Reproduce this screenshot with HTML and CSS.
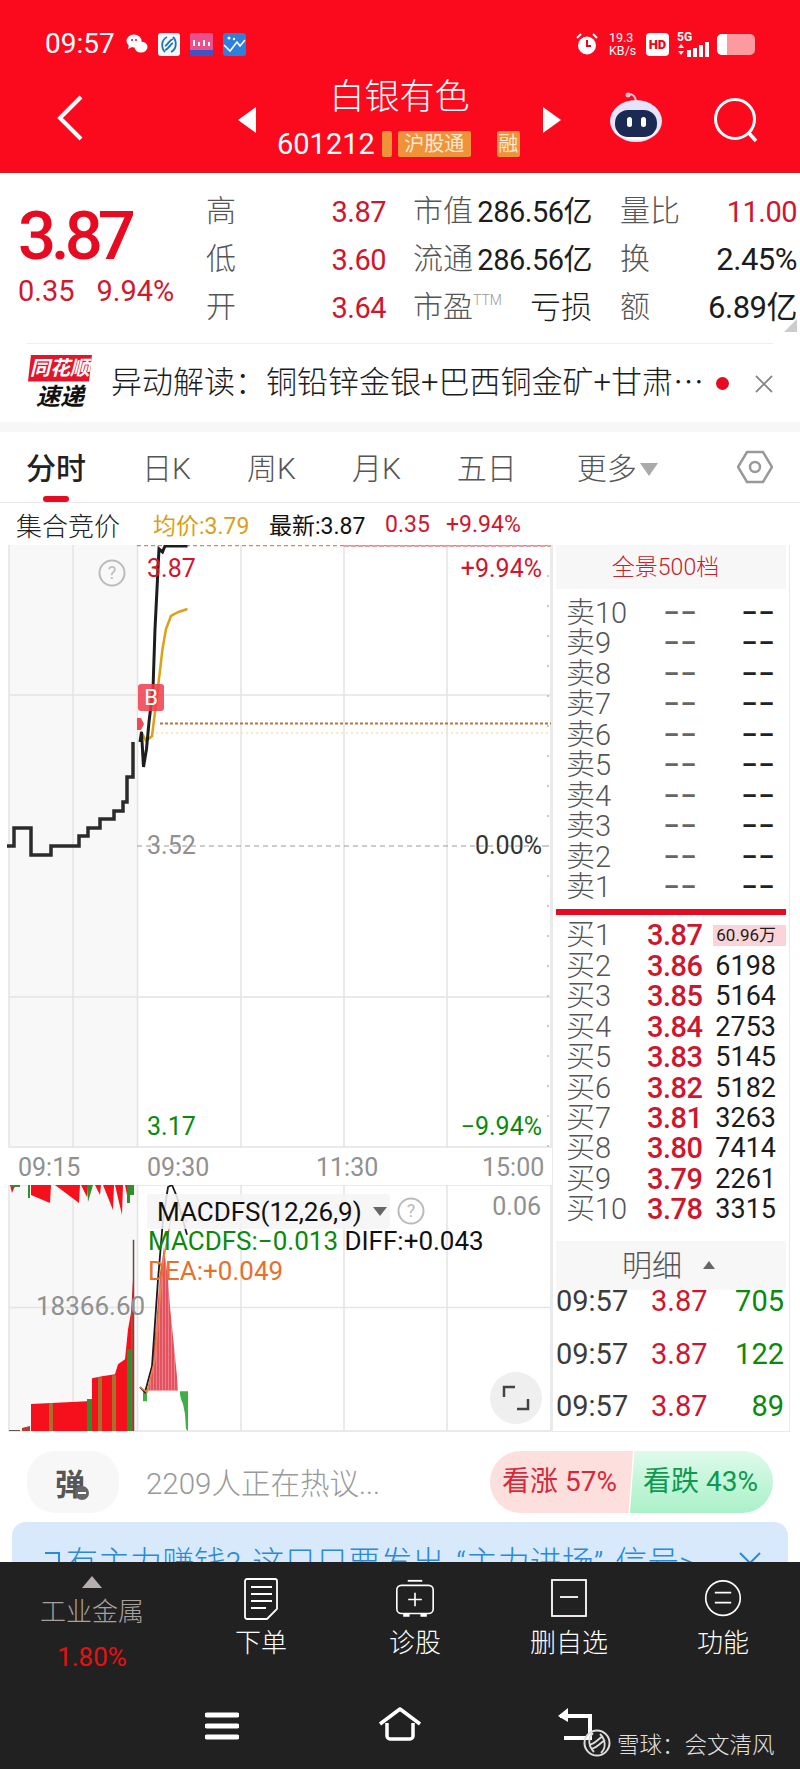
FILE: index.html
```html
<!DOCTYPE html>
<html lang="zh">
<head>
<meta charset="utf-8">
<title>白银有色</title>
<link rel="stylesheet" href="styles.css">
</head>
<body>
<div class="page">
  <header class="header">
    <div class="status">
      <div class="status-left">
        <span class="clock">09:57</span>
        <svg class="ic-wechat" viewBox="0 0 22 22"><ellipse cx="8" cy="8" rx="7.5" ry="6.5" fill="#fff"/><path d="M3 12l-1 4 4-2z" fill="#fff"/><ellipse cx="15" cy="14" rx="6.5" ry="5.5" fill="#fff"/><circle cx="6" cy="7" r="1" fill="#f5001b"/><circle cx="10" cy="7" r="1" fill="#f5001b"/></svg>
        <svg class="ic-app" viewBox="0 0 22 23"><rect width="22" height="23" rx="3" fill="#f4f8fb"/><path d="M9 4c-6 3-6 11-2 15M13 19c6-3 6-11 2-15M7 13c3-1 4-6 8-7M7 17c4-1 5-6 8-7" fill="none" stroke="#1f74b8" stroke-width="1.8"/></svg>
        <svg class="ic-app ic-app2" viewBox="0 0 23 23"><rect width="23" height="23" rx="2" fill="#ec4f8b"/><rect y="17" width="23" height="6" fill="#3c55c4"/><path d="M4 13V7M9 13V9M14 13V7M19 13V9" stroke="#fff" stroke-width="2"/></svg>
        <svg class="ic-app ic-app3" viewBox="0 0 23 23"><rect width="23" height="23" rx="3" fill="#2f7fdc"/><path d="M1 12l6 6 7-9 3 4 5-6" fill="none" stroke="#fff" stroke-width="1.6"/><circle cx="6" cy="5" r="1.5" fill="#fff"/><circle cx="11" cy="6" r="1.2" fill="#fff"/></svg>
      </div>
      <div class="status-right">
        <svg class="ic-alarm" viewBox="0 0 24 24"><circle cx="12" cy="13.500" r="9" fill="#fff"/><path d="M12 8v6h4" fill="none" stroke="#f5001b" stroke-width="2"/><path d="M2 6l4-4M22 6l-4-4" stroke="#fff" stroke-width="2"/></svg>
        <div class="speed"><span>19.3</span><span>KB/s</span></div>
        <span class="hd">HD</span>
        <div class="signal">
          <span class="five-g">5G</span>
          <svg class="ic-bars" viewBox="0 0 34 20"><path d="M1 11l3-4 3 4zM1 14l3 4 3-4z" fill="#fff"/><rect x="10" y="13" width="4" height="7" fill="#fff"/><rect x="16" y="11" width="4" height="9" fill="#fff"/><rect x="22" y="8" width="4" height="12" fill="#fff"/><rect x="28" y="5" width="4" height="15" fill="#fff"/></svg>
        </div>
        <div class="battery"><span class="battery-fill"></span></div>
      </div>
    </div>
    <div class="nav">
      <svg class="ic-back" viewBox="0 0 28 46"><path d="M25 2L4 23l21 21" fill="none" stroke="#fff" stroke-width="4"/></svg>
      <div class="nav-center">
        <span class="tri-left"></span>
        <div class="nav-title">
          <div class="stock-name">白银有色</div>
          <div class="stock-code"><span>601212</span><i class="tag tag-a"></i><i class="tag tag-b">沪股通</i><i class="tag tag-c">融</i></div>
        </div>
        <span class="tri-right"></span>
      </div>
      <svg class="ic-robot" viewBox="0 0 54 52"><path d="M18 3c4-2 8 0 9 6" fill="none" stroke="#f4c4cc" stroke-width="2"/><circle cx="19" cy="3" r="2.500" fill="#f4c4cc"/><ellipse cx="27" cy="29" rx="26" ry="21" fill="#e6e4fa"/><path d="M5 38a26 21 0 0 0 44 0z" fill="#fff"/><rect x="6" y="18" width="42" height="27" rx="13" fill="#1b2a52"/><rect x="18" y="25" width="5" height="10" rx="2.500" fill="#fff"/><rect x="32" y="25" width="5" height="10" rx="2.500" fill="#fff"/></svg>
      <svg class="ic-search" viewBox="0 0 46 46"><circle cx="22" cy="22" r="19.500" fill="none" stroke="#fff" stroke-width="3"/><path d="M35 35l8 9" stroke="#fff" stroke-width="3.500"/></svg>
    </div>
  </header>

  <section class="quote">
    <div class="price-block">
      <div class="big-price">3.87</div>
      <div class="change"><span>0.35</span><span>9.94%</span></div>
    </div>
    <div class="stats">
      <div class="cell"><span class="lab">高</span><span class="val red">3.87</span></div>
      <div class="cell"><span class="lab">市值</span><span class="val">286.56亿</span></div>
      <div class="cell"><span class="lab">量比</span><span class="val red">11.00</span></div>
      <div class="cell"><span class="lab">低</span><span class="val red">3.60</span></div>
      <div class="cell"><span class="lab">流通</span><span class="val">286.56亿</span></div>
      <div class="cell"><span class="lab">换</span><span class="val val-wide">2.45%</span></div>
      <div class="cell"><span class="lab">开</span><span class="val red">3.64</span></div>
      <div class="cell"><span class="lab">市盈<sup class="ttm">TTM</sup></span><span class="val val-cjk">亏损</span></div>
      <div class="cell"><span class="lab">额</span><span class="val val-wide">6.89亿</span></div>
    </div>
    <span class="corner"></span>
  </section>

  <section class="news">
    <div class="news-logo"><span class="logo-top">同花顺</span><span class="logo-bottom">速递</span></div>
    <div class="news-text">异动解读：铜铅锌金银+巴西铜金矿+甘肃⋯</div>
    <span class="news-dot"></span>
    <svg class="ic-x" viewBox="0 0 18 18"><path d="M1 1l16 16M17 1L1 17" stroke="#888" stroke-width="1.800"/></svg>
  </section>

  <nav class="tabs">
    <span class="tab tab-on">分时</span>
    <span class="tab">日K</span>
    <span class="tab">周K</span>
    <span class="tab">月K</span>
    <span class="tab">五日</span>
    <span class="tab tab-more">更多<i class="tri-more"></i></span>
    <svg class="ic-hex" viewBox="0 0 36 36"><path d="M10 3h16l9 15-9 15H10L1 18z" fill="none" stroke="#999" stroke-width="2.500"/><circle cx="18" cy="18" r="5" fill="none" stroke="#999" stroke-width="2.500"/></svg>
  </nav>

  <div class="legend">
    <span class="auction">集合竞价</span>
    <span class="gold">均价:3.79</span>
    <span class="latest">最新:3.87</span>
    <span class="red diff1">0.35</span>
    <span class="red diff2">+9.94%</span>
  </div>

  <div class="board">
    <div class="charts">
      <div class="main-chart">
        <svg class="canvas" viewBox="0 546 552 603" preserveAspectRatio="none">
          <rect x="9" y="546" width="128" height="603" fill="#f8f8f8"/>
          <path d="M9 546V1148H551V546M73 546V1148M137.500 546V1148M241 546V1148M344 546V1148M447 546V1148M9 696H551M9 998H551M9 1148H551" fill="none" stroke="#e4e4e4" stroke-width="1.500"/>
          <path d="M137 546.500H551" stroke="#c98f5a" stroke-width="1.500" stroke-dasharray="4 3"/>
          <path d="M344 547H551" stroke="#ee9aa2" stroke-width="2" stroke-dasharray="5 2"/>
          <path d="M160 724.500H551" stroke="#b8763a" stroke-width="1.800" stroke-dasharray="3 2"/>
          <path d="M156 734H551" stroke="#f3e6b0" stroke-width="1.500" stroke-dasharray="2 3"/>
          <path d="M137 847H551" stroke="#999" stroke-width="1.200" stroke-dasharray="5 4"/>
          <path d="M548 546V1148" stroke="#bbb" stroke-width="1.500" stroke-dasharray="2 28"/>
          <path d="M7 847H14V829H31V856H51V847H79V837H88V829H100V820H114V812H123V803H127V778H133V743" fill="none" stroke="#2b2b2b" stroke-width="3.500"/>
          <path d="M141 732L146 742L152 737L157 697L162.500 650L166 630L171 617L178.500 613L187.500 610" fill="none" stroke="#e0a015" stroke-width="2.500"/>
          <path d="M140 743L141.500 733L143.500 768L146.500 750L149 723L153 690L155 630L159 550L162.500 553L165 547H187.500" fill="none" stroke="#1d1d1d" stroke-width="3"/>
          <path d="M137 719h4l3 6-3 6h-4z" fill="#ee4a55"/>
        </svg>
        <svg class="ic-help help-main" viewBox="0 0 28 28"><circle cx="14" cy="14" r="12.500" fill="none" stroke="#bbb" stroke-width="2"/><text x="14" y="20" text-anchor="middle" class="help-q">?</text></svg>
        <span class="ax ax-top-l red">3.87</span>
        <span class="ax ax-top-r red">+9.94%</span>
        <span class="ax ax-mid-l">3.52</span>
        <span class="ax ax-mid-r">0.00%</span>
        <span class="ax ax-bot-l green">3.17</span>
        <span class="ax ax-bot-r green">−9.94%</span>
        <span class="badge-b">B</span>
      </div>
      <div class="time-axis">
        <span class="t1">09:15</span><span class="t2">09:30</span><span class="t3">11:30</span><span class="t4">15:00</span>
      </div>
      <div class="sub-chart">
        <svg class="canvas" viewBox="0 1185 552 248" preserveAspectRatio="none">
          <defs>
            <pattern id="hist" width="3" height="10" patternUnits="userSpaceOnUse"><rect width="3" height="10" fill="#e4525f"/><rect width="1" height="10" fill="#ec808a"/></pattern>
          </defs>
          <rect x="9" y="1185" width="128" height="248" fill="#f8f8f8"/>
          <path d="M9 1185V1432H551V1185H9M73 1185V1432M137.500 1185V1432M241 1185V1432M344 1185V1432M447 1185V1432M9 1308H551" fill="none" stroke="#e4e4e4" stroke-width="1.500"/>
          <path d="M10 1185L12 1193L14 1188L17 1185H31V1195L50 1203L51 1185H55L79 1203L80 1185H81L87 1197L88 1185H95L100 1195L101 1185H103L113 1210L114 1185H115L122 1215L123 1185H125L128 1200L130 1185H134Z" fill="#f5101c"/>
          <path d="M11 1185h9v2h-9zM28 1185h2v13h-2zM87 1185h6l-5 17zM127 1185h3v18h-3zM130 1185h4v10h-4z" fill="#2f8f28"/>
          <path d="M22 1432V1429L30 1427V1432Z" fill="#b53a30"/>
          <path d="M9 1431H20V1432H9Z" fill="#5a5a4a"/>
          <path d="M31 1432V1405L87 1402V1400H92V1379L102 1377L115 1375L118 1365L125 1360L128 1330L131 1313L133 1280V1432Z" fill="#f5101c"/>
          <path d="M49 1404h4v28h-4zM98 1378h4v54h-4zM112 1376h4v56h-4z" fill="#a8702c"/>
          <path d="M87 1400h5v32h-5zM127 1350h4v82h-4z" fill="#2f8f28"/>
          <path d="M131 1313h3v119h-3z" fill="#b8483a"/>
          <path d="M133.500 1240V1432" stroke="#6b4a44" stroke-width="1.500"/>
          <path d="M148 1391L152 1367L157 1313L160 1273L164 1247L168 1280L170 1307L173 1337L177 1377L178 1391Z" fill="url(#hist)"/>
          <path d="M180 1392H188V1432L186 1430L185 1415L183 1405L181 1400L180 1395ZM143 1392H147V1402H143Z" fill="#3cb043"/>
          <path d="M143 1391.500H178" stroke="#e9a2a8" stroke-width="1"/>
          <path d="M140 1388L145 1393L152 1367L158 1280L163 1220L168 1187L172 1185L177 1197L182 1217L187 1235" fill="none" stroke="#1b1b1b" stroke-width="1.800"/>
          <path d="M140 1388L147 1393L155 1360L163 1263L172 1213L180 1207L187 1223" fill="none" stroke="#f08040" stroke-width="1.500"/>
        </svg>
        <div class="macd-box"><span class="macd-name">MACDFS(12,26,9)</span><i class="tri-macd"></i></div>
        <svg class="ic-help help-sub" viewBox="0 0 28 28"><circle cx="14" cy="14" r="12.500" fill="none" stroke="#bbb" stroke-width="2"/><text x="14" y="20" text-anchor="middle" class="help-q">?</text></svg>
        <span class="sub-max">0.06</span>
        <div class="macd-vals"><span class="green">MACDFS:−0.013</span> <span class="black">DIFF:+0.043</span></div>
        <div class="macd-dea">DEA:+0.049</div>
        <span class="sub-vol">18366.60</span>
        <div class="expand"><svg viewBox="0 0 28 28"><path d="M2 13V3h11M26 15v10H15" fill="none" stroke="#444" stroke-width="2.500"/></svg></div>
      </div>
    </div>

    <aside class="panel">
      <div class="panel-head">全景500档</div>
      <div class="book book-sell">
        <div class="row"><span class="name">卖10</span><span class="dash">––</span><span class="dash dark">––</span></div>
        <div class="row"><span class="name">卖9</span><span class="dash">––</span><span class="dash dark">––</span></div>
        <div class="row"><span class="name">卖8</span><span class="dash">––</span><span class="dash dark">––</span></div>
        <div class="row"><span class="name">卖7</span><span class="dash">––</span><span class="dash dark">––</span></div>
        <div class="row"><span class="name">卖6</span><span class="dash">––</span><span class="dash dark">––</span></div>
        <div class="row"><span class="name">卖5</span><span class="dash">––</span><span class="dash dark">––</span></div>
        <div class="row"><span class="name">卖4</span><span class="dash">––</span><span class="dash dark">––</span></div>
        <div class="row"><span class="name">卖3</span><span class="dash">––</span><span class="dash dark">––</span></div>
        <div class="row"><span class="name">卖2</span><span class="dash">––</span><span class="dash dark">––</span></div>
        <div class="row"><span class="name">卖1</span><span class="dash">––</span><span class="dash dark">––</span></div>
      </div>
      <div class="book-split"></div>
      <div class="book book-buy">
        <div class="row"><span class="name">买1</span><span class="prc">3.87</span><span class="vol vol-hi">60.96万</span></div>
        <div class="row"><span class="name">买2</span><span class="prc">3.86</span><span class="vol">6198</span></div>
        <div class="row"><span class="name">买3</span><span class="prc">3.85</span><span class="vol">5164</span></div>
        <div class="row"><span class="name">买4</span><span class="prc">3.84</span><span class="vol">2753</span></div>
        <div class="row"><span class="name">买5</span><span class="prc">3.83</span><span class="vol">5145</span></div>
        <div class="row"><span class="name">买6</span><span class="prc">3.82</span><span class="vol">5182</span></div>
        <div class="row"><span class="name">买7</span><span class="prc">3.81</span><span class="vol">3263</span></div>
        <div class="row"><span class="name">买8</span><span class="prc">3.80</span><span class="vol">7414</span></div>
        <div class="row"><span class="name">买9</span><span class="prc">3.79</span><span class="vol">2261</span></div>
        <div class="row"><span class="name">买10</span><span class="prc">3.78</span><span class="vol">3315</span></div>
      </div>
      <div class="detail-head">明细<i class="tri-detail"></i></div>
      <div class="detail">
        <div class="tick"><span class="tk-time">09:57</span><span class="tk-prc">3.87</span><span class="tk-vol">705</span></div>
        <div class="tick"><span class="tk-time">09:57</span><span class="tk-prc">3.87</span><span class="tk-vol">122</span></div>
        <div class="tick"><span class="tk-time">09:57</span><span class="tk-prc">3.87</span><span class="tk-vol">89</span></div>
      </div>
    </aside>
  </div>

  <div class="comment">
    <div class="danmu"><span class="danmu-char">弹</span><i class="danmu-off"></i></div>
    <span class="hot">2209人正在热议...</span>
    <div class="vote">
      <span class="vote-up">看涨 57%</span>
      <span class="vote-down">看跌 43%</span>
    </div>
  </div>

  <div class="banner">
    <i class="banner-icon"></i>
    <span class="banner-text">有主力赚钱? 这只只要发出 “主力进场” 信号&gt;</span>
    <svg class="banner-x" viewBox="0 0 24 24"><path d="M2 2l20 20M22 2L2 22" stroke="#2a8ad8" stroke-width="2"/></svg>
  </div>

  <footer class="footer">
    <div class="tools">
      <div class="tool tool-sector">
        <i class="tri-sector"></i>
        <span class="sector-name">工业金属</span>
        <span class="sector-val">1.80%</span>
      </div>
      <div class="tool">
        <svg class="tool-ic" viewBox="0 0 40 44"><path d="M6 2h28a2 2 0 0 1 2 2v28l-10 10H6a2 2 0 0 1-2-2V4a2 2 0 0 1 2-2z" fill="none" stroke="#fff" stroke-width="1.800"/><path d="M10 10h21M10 17h21M10 24h21M10 31h15" stroke="#fff" stroke-width="1.800"/></svg>
        <span>下单</span>
      </div>
      <div class="tool">
        <svg class="tool-ic" viewBox="0 0 44 44"><path d="M14 2h16" stroke="#fff" stroke-width="2"/><rect x="2" y="7" width="40" height="31" rx="5" fill="none" stroke="#fff" stroke-width="1.800"/><path d="M22 15v15M14.500 22.500h15" stroke="#fff" stroke-width="1.800"/><path d="M9 40h7M28 40h7" stroke="#fff" stroke-width="3"/></svg>
        <span>诊股</span>
      </div>
      <div class="tool">
        <svg class="tool-ic" viewBox="0 0 40 44"><rect x="3" y="3" width="34" height="36" fill="none" stroke="#fff" stroke-width="1.800"/><path d="M11 20h18" stroke="#fff" stroke-width="1.800"/></svg>
        <span>删自选</span>
      </div>
      <div class="tool">
        <svg class="tool-ic" viewBox="0 0 44 44"><circle cx="22" cy="21" r="19" fill="none" stroke="#fff" stroke-width="1.800"/><path d="M13 15h18M13 26h18" stroke="#fff" stroke-width="1.800"/></svg>
        <span>功能</span>
      </div>
    </div>
    <div class="sysnav">
      <svg class="ic-menu" viewBox="0 0 34 28"><path d="M2 3h30M2 14h30M2 25h30" stroke="#fff" stroke-width="5" stroke-linecap="round"/></svg>
      <svg class="ic-home" viewBox="0 0 44 34"><path d="M2 17L22 2l20 15M9 16v13a3 3 0 0 0 3 3h20a3 3 0 0 0 3-3V16" fill="none" stroke="#fff" stroke-width="3.500" stroke-linejoin="round"/></svg>
      <svg class="ic-return" viewBox="0 0 38 34"><path d="M4 9h30v22H8" fill="none" stroke="#fff" stroke-width="4"/><path d="M12 1L2 9l10 6z" fill="#fff"/></svg>
    </div>
    <div class="mark">
      <svg class="mark-ic" viewBox="0 0 28 28"><circle cx="14" cy="14" r="12.500" fill="none" stroke="#ddd" stroke-width="2"/><path d="M10 4c-6 6-4 14 1 19M18 24c6-6 4-14-1-19M6 16c6-1 9-6 14-9M8 20c6-1 9-6 14-9" fill="none" stroke="#ddd" stroke-width="1.800"/></svg>
      <span>雪球：会文清风</span>
    </div>
  </footer>
</div>
</body>
</html>
```

FILE: styles.css
```css
* { box-sizing: border-box; }
html, body { margin: 0; padding: 0; background: #fff; }
body { font-family: Roboto, "Noto Sans CJK SC", sans-serif; }
i { font-style: normal; display: block; }
svg { display: block; flex: none; }
.page { width: 800px; height: 1769px; overflow: hidden; display: flex; flex-direction: column; position: relative; }
.red { color: #d0152c; }
.green { color: #0a8a0a; }
.black { color: #111; }

/* header */
.header { height: 173px; background: #fb0a1e; border-bottom: 1px solid #c9202c; color: #fff; flex: none; }
.status { height: 88px; padding: 32px 45px 0; display: flex; justify-content: space-between; align-items: flex-start; }
.status-left { display: flex; align-items: center; height: 24px; }
.clock { font-size: 28px; line-height: 24px; width: 81px; }
.ic-wechat { width: 22px; height: 22px; }
.ic-app { width: 22px; height: 23px; margin-left: 10px; }
.ic-app2, .ic-app3 { width: 23px; }
.status-right { display: flex; align-items: center; height: 24px; margin-right: 0; }
.ic-alarm { width: 24px; height: 24px; margin-right: 10px; }
.speed { display: flex; flex-direction: column; font-size: 12.500px; line-height: 13px; width: 37px; text-align: left; }
.hd { width: 23px; height: 23px; border-radius: 4px; background: #fff; color: #f5001b; font-size: 13px; font-weight: 900; line-height: 23px; text-align: center; margin-right: 8px; }
.signal { width: 34px; height: 24px; position: relative; margin-right: 6px; }
.five-g { position: absolute; left: 0; top: -2px; font-size: 12px; font-weight: 700; line-height: 14px; }
.ic-bars { position: absolute; left: 0; top: 5px; width: 34px; height: 20px; }
.battery { width: 38px; height: 21px; background: #fd9aa0; border-radius: 5px; overflow: hidden; position: relative; }
.battery-fill { display: block; width: 10px; height: 21px; background: #fff; }

.nav { height: 84px; display: flex; align-items: flex-start; padding-left: 56px; position: relative; }
.ic-back { width: 28px; height: 46px; margin-top: 7px; }
.nav-center { width: 323px; margin-left: 154px; display: flex; justify-content: space-between; align-items: flex-start; }
.tri-left, .tri-right { width: 0; height: 0; margin-top: 19px; border-top: 13px solid transparent; border-bottom: 13px solid transparent; }
.tri-left { border-right: 18px solid #fff; }
.tri-right { border-left: 18px solid #fff; }
.nav-title { display: flex; flex-direction: column; align-items: center; width: 260px; }
.stock-name { font-size: 35px; line-height: 32px; font-weight: 300; margin-top: -6px; }
.stock-code { display: flex; align-items: center; font-size: 29px; line-height: 30px; margin-top: 15px; width: 244px; margin-left: -1px; }
.tag { background: #f0923a; color: #fbe8d0; font-size: 20px; height: 26px; line-height: 26px; text-align: center; border-radius: 2px; overflow: hidden; }
.tag-a { width: 10px; margin-left: 7px; }
.tag-b { width: 73px; margin-left: 6px; }
.tag-c { width: 23px; margin-left: 26px; }
.ic-robot { width: 54px; height: 52px; margin-left: 48px; margin-top: 4px; }
.ic-search { width: 46px; height: 46px; margin-left: 50px; margin-top: 9px; }

/* quote */
.quote { height: 170px; padding: 15px 0 0 0; display: flex; position: relative; flex: none; }
.quote::after { content: ""; position: absolute; left: 27px; right: 27px; bottom: -1px; height: 1px; background: #eee; }
.price-block { width: 206px; padding-left: 18px; }
.big-price { font-size: 67px; line-height: 50px; font-weight: 500; color: #e60b20; letter-spacing: -5px; margin-top: 23px; white-space: nowrap; }
.change { display: flex; gap: 22px; font-size: 29px; line-height: 32px; color: #d0182e; margin-top: 14px; white-space: nowrap; }
.stats { display: grid; grid-template-columns: 180px 179px 178px; column-gap: 27px; grid-auto-rows: 48px; }
.stats .cell:nth-child(3n) { margin-left: 1px; }
.cell { display: flex; justify-content: space-between; align-items: center; white-space: nowrap; }
.lab { font-size: 30px; line-height: 40px; color: #555; font-weight: 300; margin-bottom: 3px; }
.val { font-size: 29px; line-height: 40px; letter-spacing: -.5px; color: #1c1c1c; }
.val-wide { font-size: 31px; }
.val-cjk { font-size: 31px; font-weight: 300; letter-spacing: 0; }
.val.red { color: #d0152c; }
.ttm { font-size: 14px; color: #999; vertical-align: 12px; line-height: 0; }
.corner { position: absolute; right: 3px; bottom: 11px; width: 0; height: 0; border-left: 13px solid transparent; border-bottom: 13px solid #ccc; }

.news { height: 79px; display: flex; align-items: center; padding-left: 28px; position: relative; flex: none; }
.news-logo { width: 64px; height: 56px; display: flex; flex-direction: column; align-items: center; }
.logo-top { width: 64px; height: 27px; background: #e2162b; color: #fff; font-size: 20px; line-height: 27px; font-weight: 700; font-style: italic; text-align: center; white-space: nowrap; clip-path: polygon(3px 0, 100% 0, 61px 100%, 0 100%); }
.logo-bottom { font-size: 24px; line-height: 28px; font-weight: 700; font-style: italic; color: #111; margin-top: 1px; }
.news-text { font-size: 31px; line-height: 40px; font-weight: 300; color: #1c1c1c; margin-left: 19px; width: 590px; white-space: nowrap; }
.news-dot { width: 13px; height: 13px; border-radius: 50%; background: #e60b20; position: absolute; left: 716px; top: 34px; }
.ic-x { width: 18px; height: 18px; position: absolute; left: 755px; top: 32px; }

/* tabs */
.tabs { height: 81px; border-top: 10px solid #f7f7f7; border-bottom: 1px solid #e8e8e8; display: flex; align-items: center; gap: 56px; padding: 4px 0 0 26px; position: relative; flex: none; }
.tab { font-size: 30px; font-weight: 300; color: #555; line-height: 40px; white-space: nowrap; }
.tab-on { color: #222; font-weight: 500; position: relative; width: 60px; }
.tab-on::after { content: ""; position: absolute; left: 17px; top: 47px; width: 26px; height: 6px; border-radius: 3px; background: #e60b20; }
.tab-more { display: flex; align-items: center; margin-left: 4px; }
.tri-more { width: 0; height: 0; margin-left: 3px; border-left: 9px solid transparent; border-right: 9px solid transparent; border-top: 13px solid #aaa; }
.ic-hex { position: absolute; left: 737px; top: 17px; width: 36px; height: 36px; }

.legend { height: 42px; display: flex; align-items: center; white-space: nowrap; flex: none; font-size: 23px; position: relative; }
.auction { font-size: 26px; font-weight: 300; color: #222; margin-left: 16px; width: 137px; }
.gold { color: #d9a017; width: 116px; }
.latest { color: #111; width: 116px; }
.diff1 { width: 61px; }

/* charts */
.board { height: 887px; display: flex; flex: none; }
.charts { width: 552px; flex: none; }
.main-chart { height: 603px; position: relative; }
.canvas { position: absolute; left: 0; top: 0; width: 100%; height: 100%; }
.ax { position: absolute; font-size: 25px; line-height: 30px; white-space: nowrap; }
.ax-top-l { left: 147px; top: 9px; }
.ax-top-r { right: 10px; top: 9px; }
.ax-mid-l { left: 147px; top: 286px; color: #909090; }
.ax-mid-r { right: 10px; top: 286px; color: #333; }
.ax-bot-l { left: 147px; top: 567px; }
.ax-bot-r { right: 10px; top: 567px; }
.badge-b { position: absolute; left: 138px; top: 139px; width: 26px; height: 27px; border-radius: 3px; background: rgba(240,60,75,.85); color: #fff; font-size: 22px; line-height: 27px; text-align: center; }
.ic-help { position: absolute; width: 28px; height: 28px; }
.help-main { left: 98px; top: 14px; }
.help-sub { left: 397px; top: 12px; }
.help-q { font-size: 18px; fill: #bbb; font-family: Roboto, sans-serif; }
.time-axis { height: 37px; display: flex; position: relative; font-size: 25px; line-height: 39px; color: #909090; }
.t1 { margin-left: 18px; width: 129px; }
.t2 { width: 169px; }
.t3 { width: 166px; }
.sub-chart { height: 247px; position: relative; }
.macd-box { position: absolute; left: 147px; top: 9px; width: 243px; height: 35px; background: rgba(245,245,245,.85); border-radius: 3px; display: flex; align-items: center; padding-left: 10px; }
.macd-name { font-size: 26px; color: #111; width: 216px; white-space: nowrap; }
.tri-macd { width: 0; height: 0; border-left: 7px solid transparent; border-right: 7px solid transparent; border-top: 9px solid #666; }
.sub-max { position: absolute; right: 11px; top: 7px; font-size: 25px; line-height: 30px; color: #909090; }
.macd-vals { position: absolute; left: 148px; top: 41px; font-size: 26px; line-height: 30px; white-space: nowrap; }
.macd-dea { position: absolute; left: 148px; top: 71px; font-size: 26px; line-height: 30px; color: #e8702a; white-space: nowrap; }
.sub-vol { position: absolute; left: 36px; top: 106px; font-size: 26px; line-height: 30px; color: #909090; }
.expand { position: absolute; left: 490px; top: 187px; width: 52px; height: 52px; border-radius: 50%; background: #efefef; display: flex; align-items: center; justify-content: center; }
.expand svg { width: 28px; height: 28px; }

/* panel */
.panel { width: 238px; height: 887px; border-left: 1px solid #eaeaea; border-right: 1px solid #eaeaea; border-bottom: 1px solid #eaeaea; padding: 0 3px; flex: none; }
.panel-head { height: 44px; background: #f7f7f7; color: #c9202c; font-size: 23px; line-height: 46px; text-align: center; font-weight: 300; padding-right: 11px; }
.book { padding-left: 10px; }
.book-sell { margin-top: 9px; }
.row { display: grid; grid-template-columns: 81px 51px 78px; height: 30.450px; line-height: 30.450px; align-items: center; white-space: nowrap; }
.name { font-size: 29px; color: #555; font-weight: 300; }
.dash { font-size: 24px; font-weight: 700; letter-spacing: 2px; color: #666; text-align: right; }
.dash.dark { color: #222; }
.prc { font-size: 29px; letter-spacing: -.5px; color: #d0152c; text-align: right; font-weight: 500; }
.vol { font-size: 27px; color: #1c1c1c; text-align: right; }
.vol-hi { font-size: 17px; justify-self: end; width: 73px; height: 21px; line-height: 21px; margin-right: -10px; padding-right: 10px; background: #fad4d8; }
.book-split { height: 6px; background: #e60b20; margin-top: 7px; }
.book-buy { margin-top: 5px; }
.detail-head { height: 49px; margin-top: 16px; background: #f7f7f7; font-size: 30px; font-weight: 300; line-height: 49px; color: #555; display: flex; align-items: center; padding-left: 66px; }
.tri-detail { width: 0; height: 0; margin-left: 21px; border-left: 6px solid transparent; border-right: 6px solid transparent; border-bottom: 8px solid #666; }
.detail { padding: 0 2px 0 0; margin-top: -15px; }
.tick { height: 52.500px; display: flex; align-items: center; justify-content: space-between; font-size: 29px; }
.tk-time { color: #3c3c3c; width: 95px; }
.tk-prc { color: #d0152c; width: 60px; }
.tk-vol { color: #0a8a0a; flex: 1; text-align: right; }

/* comment */
.comment { height: 90px; padding: 19px 27px 0; display: flex; flex: none; align-items: flex-start; }
.danmu { width: 92px; height: 62px; border-radius: 28px; background: #f7f7f7; position: relative; display: flex; align-items: center; justify-content: center; }
.danmu-char { font-size: 30px; font-weight: 700; color: #555; margin-left: -6px; }
.danmu-off { position: absolute; left: 48px; top: 35px; width: 14px; height: 14px; border-radius: 50%; background: #666; }
.danmu-off::after { content: ""; position: absolute; left: 3px; top: 6px; width: 8px; height: 2px; background: #fff; }
.hot { font-size: 29.500px; line-height: 66px; color: #999; font-weight: 300; margin-left: 27px; width: 344px; white-space: nowrap; }
.vote { width: 283px; height: 62px; display: flex; white-space: nowrap; font-size: 28px; line-height: 62px; }
.vote-up { width: 143px; padding-left: 12px; background: #fde0dd; color: #d8283a; border-radius: 31px 0 0 31px; clip-path: polygon(0 0, 100% 0, 97% 100%, 0 100%); }
.vote-down { width: 143px; margin-left: -3px; padding-left: 13px; background: linear-gradient(#dffaeb, #a9f1c8); color: #0b9a50; border-radius: 0 31px 31px 0; clip-path: polygon(3% 0, 100% 0, 100% 100%, 0 100%); }

.banner { height: 40px; margin: 0 12px; flex: none; background: #d7e9fb; border-radius: 14px 14px 0 0; overflow: hidden; display: flex; position: relative; padding-left: 33px; }
.banner-icon { width: 15px; height: 14px; margin-top: 30px; border-top: 2px solid #2a8ad8; border-right: 2px solid #2a8ad8; }
.banner-text { font-size: 32px; line-height: 40px; color: #2a8ad8; font-weight: 300; margin: 21px 0 0 6px; height: 40px; white-space: nowrap; word-spacing: 4px; }
.banner-x { position: absolute; left: 726px; top: 29px; width: 24px; height: 24px; }

/* footer */
.footer { height: 207px; background: #212121; color: #fff; flex: 1; display: flex; flex-direction: column; position: relative; }
.tools { height: 122px; display: grid; grid-template-columns: 184px repeat(4, 154px); padding-top: 15px; }
.tool { display: flex; flex-direction: column; align-items: center; font-size: 26px; font-weight: 300; line-height: 36px; }
.tool-ic { width: 40px; height: 44px; margin-bottom: 4px; }
.tri-sector { width: 0; height: 0; margin-top: -1px; border-left: 10px solid transparent; border-right: 10px solid transparent; border-bottom: 12px solid #b5b0ad; }
.sector-name { color: #a8a09c; margin-top: 6px; }
.sector-val { color: #e81010; margin-top: 9px; font-size: 26px; font-weight: 400; }
.sysnav { display: flex; align-items: flex-start; padding: 23px 0 0 205px; }
.ic-menu { width: 34px; height: 28px; margin-top: 5px; }
.ic-home { width: 44px; height: 34px; margin-left: 139px; }
.ic-return { width: 38px; height: 34px; margin-left: 134px; }
.mark { position: absolute; left: 583px; top: 165px; display: flex; align-items: center; gap: 6px; color: #e0e0e0; font-size: 22.500px; font-weight: 300; white-space: nowrap; }
.mark-ic { width: 28px; height: 28px; }
```
